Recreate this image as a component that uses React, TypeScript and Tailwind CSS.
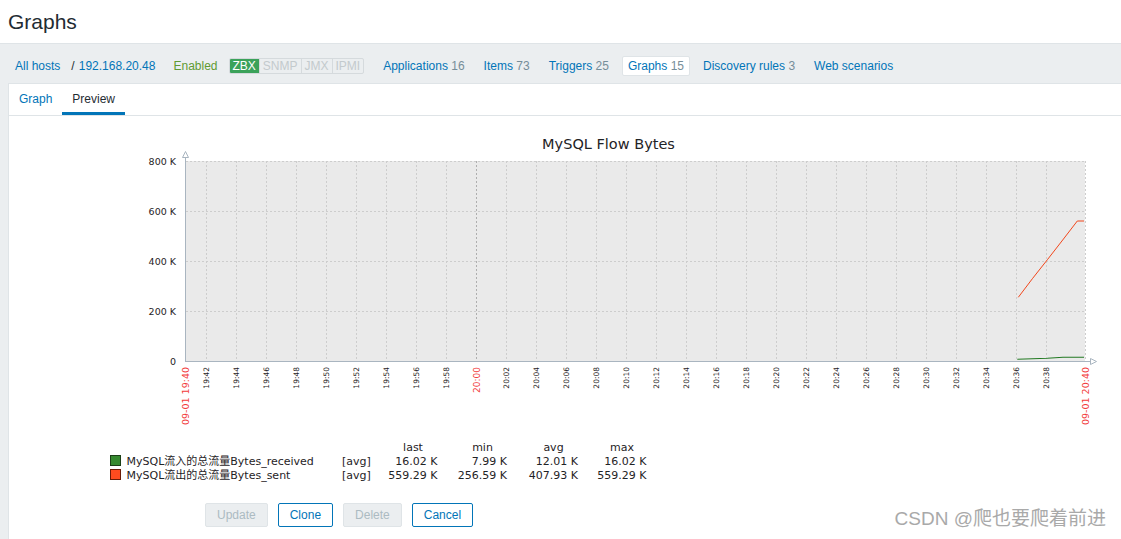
const X0 = 186
const PX_PER_MIN = 14.983
const OFFSET = 0.6333

function xAt(m: number) {
  return X0 + (m - OFFSET) * PX_PER_MIN
}

const AXIS = '#a9b5c0'
const GRID = '#cdcdcd'
const TEXT = '#1f2326'
const RED = '#f23b3b'
const FONT = "'DejaVu Sans', 'Noto Sans CJK SC', sans-serif"

const legendRows = [
  { name: 'MySQL流入的总流量Bytes_received', fill: '#35892f', stroke: '#1b3f17', vals: ['16.02 K', '7.99 K', '12.01 K', '16.02 K'], y: 465 },
  { name: 'MySQL流出的总流量Bytes_sent', fill: '#ff4b1f', stroke: '#6b1c08', vals: ['559.29 K', '256.59 K', '407.93 K', '559.29 K'], y: 479 },
]
const colRight = [437.5, 507, 578, 646.5]
const colHead = ['last', 'min', 'avg', 'max']

function Graph() {
  const ticks: { x: number; label: string; red: boolean }[] = []
  for (let m = 2; m <= 58; m += 2) {
    const total = 40 + m
    const h = total >= 60 ? 20 : 19
    const mm = String(total % 60).padStart(2, '0')
    ticks.push({ x: Math.round(xAt(m)) + 0.5, label: `${h}:${mm}`, red: m === 20 })
  }
  const yGrid = [
    { y: 161, label: '800 K' },
    { y: 211, label: '600 K' },
    { y: 261, label: '400 K' },
    { y: 311, label: '200 K' },
  ]

  return (
    <svg width={1112} height={380} viewBox="9 116 1112 380" className="block" fontFamily={FONT}>
      <text x={608.5} y={148.5} textAnchor="middle" fontSize={14.5} fill={TEXT}>MySQL Flow Bytes</text>

      <rect x={186} y={161} width={899} height={200} fill="#eaeaea" />

      {yGrid.map((g) => (
        <g key={g.y}>
          <line x1={186} x2={1085} y1={g.y + 0.5} y2={g.y + 0.5} stroke={GRID} strokeDasharray="2 2" />
          <text x={176} y={g.y + 3.5} textAnchor="end" fontSize={9.5} fill={TEXT}>{g.label}</text>
        </g>
      ))}
      <text x={176} y={364.5} textAnchor="end" fontSize={9.5} fill={TEXT}>0</text>

      {ticks.map((t) => (
        <g key={t.label}>
          <line x1={t.x} x2={t.x} y1={161} y2={361} stroke={t.red ? '#aeaeae' : GRID} strokeDasharray="2 2" />
          <text
            transform={`translate(${t.x + (t.red ? 3.3 : 2.7)},367) rotate(-90)`}
            textAnchor="end"
            fontSize={t.red ? 9 : 7.5}
            fill={t.red ? RED : TEXT}
          >
            {t.label}
          </text>
        </g>
      ))}
      <line x1={1085.5} x2={1085.5} y1={161} y2={361} stroke={GRID} strokeDasharray="2 2" />

      <text transform="translate(188.8,367) rotate(-90)" textAnchor="end" fontSize={9.5} fill={RED}>09-01 19:40</text>
      <text transform="translate(1088.8,367) rotate(-90)" textAnchor="end" fontSize={9.5} fill={RED}>09-01 20:40</text>

      {/* data */}
      <polyline
        points="1018.3,297.3 1032.7,278.3 1047.7,259.3 1062.7,240 1077.3,221 1084,221"
        fill="none"
        stroke="#f2471c"
        strokeWidth={1}
      />
      <polyline
        points="1017.3,359.3 1047.3,358.3 1063,357.3 1084,357.3"
        fill="none"
        stroke="#237a23"
        strokeWidth={1.1}
      />

      {/* axes */}
      <line x1={185.5} x2={185.5} y1={157.5} y2={362} stroke={AXIS} />
      <polygon points="185.5,151.5 182.5,157.5 188.5,157.5" fill="#fff" stroke={AXIS} />
      <line x1={185} x2={1090.5} y1={361.5} y2={361.5} stroke={AXIS} />
      <polygon points="1096.5,361.5 1090.5,358.5 1090.5,364.5" fill="#fff" stroke={AXIS} />

      {/* legend */}
      {colHead.map((h, i) => (
        <text key={h} x={colRight[i] - 24.5} y={450.5} textAnchor="middle" fontSize={11} fill={TEXT}>{h}</text>
      ))}
      {legendRows.map((r) => (
        <g key={r.name}>
          <rect x={110.5} y={r.y - 9.5} width={10} height={10} fill={r.fill} stroke={r.stroke} />
          <text x={126.5} y={r.y} fontSize={11} fill={TEXT}>{r.name}</text>
          <text x={342} y={r.y} fontSize={11} fill={TEXT}>[avg]</text>
          {r.vals.map((v, i) => (
            <text key={i} x={colRight[i]} y={r.y} textAnchor="end" fontSize={11} fill={TEXT}>{v}</text>
          ))}
        </g>
      ))}
    </svg>
  )
}

function NavItem({ label, count, active }: { label: string; count?: number; active?: boolean }) {
  return (
    <div
      className={
        active
          ? 'h-[20px] px-[5px] leading-[18px] rounded-[2px] border border-[#dfe4e7] bg-white'
          : 'h-[20px] px-[6px] leading-[20px]'
      }
    >
      <span className="text-[#0275b8]">{label}</span>
      {count !== undefined && <span className="text-[#768d99]"> {count}</span>}
    </div>
  )
}

export default function App() {
  return (
    <div className="relative w-[1121px] h-[539px] overflow-hidden bg-[#ebeef0] text-[12px] text-[#1f2c33] font-['Liberation_Sans',Arial,sans-serif]">
      <div className="h-[44px] bg-white border-b border-[#dfe4e7] flex items-center pl-[8px]">
        <h1 className="text-[21px] leading-none text-[#1f2c33]">Graphs</h1>
      </div>

      <div className="flex items-center h-[20px] mt-[12px] mb-[7px] pl-[15px] whitespace-nowrap">
        <span className="text-[#0275b8]">All hosts</span>
        <span className="ml-[11px] text-[#1f2c33]">/</span>
        <span className="ml-[4px] text-[#0275b8]">192.168.20.48</span>
        <span className="ml-[18px] text-[#5f9a33]">Enabled</span>
        <div className="ml-[11px] flex h-[16px] rounded-[2px] border border-[#d5dadd] overflow-hidden leading-[14px]">
          <span className="px-[3px] bg-[#3ba25a] text-white">ZBX</span>
          <span className="px-[3px] text-[#c3cacd] border-l border-[#d5dadd]">SNMP</span>
          <span className="px-[3px] text-[#c3cacd] border-l border-[#d5dadd]">JMX</span>
          <span className="px-[3px] text-[#c3cacd] border-l border-[#d5dadd]">IPMI</span>
        </div>
        <div className="ml-[13px] flex items-center gap-[7px]">
          <NavItem label="Applications" count={16} />
          <NavItem label="Items" count={73} />
          <NavItem label="Triggers" count={25} />
          <NavItem label="Graphs" count={15} active />
          <NavItem label="Discovery rules" count={3} />
          <NavItem label="Web scenarios" />
        </div>
      </div>

      <div className="ml-[8px] h-[456px] bg-white border-l border-t border-[#dfe4e7]">
        <div className="flex h-[32px] border-b border-[#dfe4e7]">
          <div className="px-[10px] pt-[2px] leading-[27px] border-b-[3px] border-transparent text-[#0275b8]">Graph</div>
          <div className="px-[10px] pt-[2px] leading-[27px] border-b-[3px] border-[#0275b8] text-[#1f2c33]">Preview</div>
        </div>

        <Graph />

        <div className="flex gap-[10px] mt-[7px] pl-[196px]">
          <button className="h-[24px] px-[11px] rounded-[2px] border border-[#dfe4e7] bg-[#ebeef0] text-[#acbbc2]" disabled>Update</button>
          <button className="h-[24px] px-[11px] rounded-[2px] border border-[#0275b8] bg-white text-[#0275b8]">Clone</button>
          <button className="h-[24px] px-[11px] rounded-[2px] border border-[#dfe4e7] bg-[#ebeef0] text-[#acbbc2]" disabled>Delete</button>
          <button className="h-[24px] px-[11px] rounded-[2px] border border-[#0275b8] bg-white text-[#0275b8]">Cancel</button>
        </div>
      </div>

      <div className="absolute right-[15px] top-[507px] text-[19px] leading-[24px] text-[#a9a9a9] font-['Liberation_Sans','Noto_Sans_CJK_SC',sans-serif]">
        CSDN @爬也要爬着前进
      </div>
    </div>
  )
}
